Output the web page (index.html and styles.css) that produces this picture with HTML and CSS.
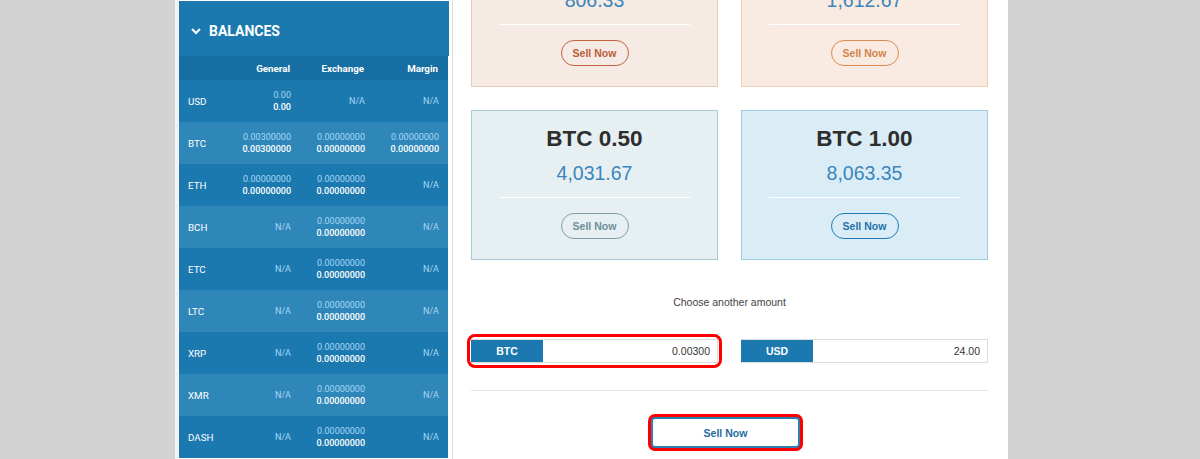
FILE: index.html
```html
<!DOCTYPE html>
<html lang="en">
<head>
<meta charset="utf-8">
<title>Sell BTC</title>
<link rel="stylesheet" href="styles.css">
</head>
<body>
<div class="page">
  <aside class="sidebar">
    <div class="sb-head">
      <svg class="chev" width="10" height="7" viewBox="0 0 10 7"><polyline points="1,1 5,5 9,1" fill="none" stroke="#fff" stroke-width="2"/></svg>
      <span>BALANCES</span>
    </div>
    <div class="bal-table">
      <div class="bal-row bal-hdr"><span></span><span>General</span><span>Exchange</span><span>Margin</span></div>
      <div class="bal-row dark"><span class="cur">USD</span><span class="val"><span class="v1">0.00</span><span class="v2">0.00</span></span><span class="na">N/A</span><span class="na">N/A</span></div>
      <div class="bal-row light"><span class="cur">BTC</span><span class="val"><span class="v1">0.00300000</span><span class="v2">0.00300000</span></span><span class="val"><span class="v1">0.00000000</span><span class="v2">0.00000000</span></span><span class="val"><span class="v1">0.00000000</span><span class="v2">0.00000000</span></span></div>
      <div class="bal-row dark"><span class="cur">ETH</span><span class="val"><span class="v1">0.00000000</span><span class="v2">0.00000000</span></span><span class="val"><span class="v1">0.00000000</span><span class="v2">0.00000000</span></span><span class="na">N/A</span></div>
      <div class="bal-row light"><span class="cur">BCH</span><span class="na">N/A</span><span class="val"><span class="v1">0.00000000</span><span class="v2">0.00000000</span></span><span class="na">N/A</span></div>
      <div class="bal-row dark"><span class="cur">ETC</span><span class="na">N/A</span><span class="val"><span class="v1">0.00000000</span><span class="v2">0.00000000</span></span><span class="na">N/A</span></div>
      <div class="bal-row light"><span class="cur">LTC</span><span class="na">N/A</span><span class="val"><span class="v1">0.00000000</span><span class="v2">0.00000000</span></span><span class="na">N/A</span></div>
      <div class="bal-row dark"><span class="cur">XRP</span><span class="na">N/A</span><span class="val"><span class="v1">0.00000000</span><span class="v2">0.00000000</span></span><span class="na">N/A</span></div>
      <div class="bal-row light"><span class="cur">XMR</span><span class="na">N/A</span><span class="val"><span class="v1">0.00000000</span><span class="v2">0.00000000</span></span><span class="na">N/A</span></div>
      <div class="bal-row dark"><span class="cur">DASH</span><span class="na">N/A</span><span class="val"><span class="v1">0.00000000</span><span class="v2">0.00000000</span></span><span class="na">N/A</span></div>
    </div>
  </aside>
  <main class="main">
    <div class="cards">
      <div class="card rust">
        <div class="card-title">BTC 0.10</div>
        <div class="card-price">806.33</div>
        <div class="card-sep"></div>
        <button class="pill">Sell Now</button>
      </div>
      <div class="card orange">
        <div class="card-title">BTC 0.20</div>
        <div class="card-price">1,612.67</div>
        <div class="card-sep"></div>
        <button class="pill">Sell Now</button>
      </div>
      <div class="card slate">
        <div class="card-title">BTC 0.50</div>
        <div class="card-price">4,031.67</div>
        <div class="card-sep"></div>
        <button class="pill">Sell Now</button>
      </div>
      <div class="card blue">
        <div class="card-title">BTC 1.00</div>
        <div class="card-price">8,063.35</div>
        <div class="card-sep"></div>
        <button class="pill">Sell Now</button>
      </div>
    </div>
    <p class="choose">Choose another amount</p>
    <div class="inputs">
      <div class="amount highlighted"><span class="amount-label">BTC</span><span class="amount-value">0.00300</span></div>
      <div class="amount"><span class="amount-label">USD</span><span class="amount-value">24.00</span></div>
    </div>
    <div class="divider"></div>
    <button class="sell-main">Sell Now</button>
  </main>
</div>
</body>
</html>
```

FILE: styles.css
```css
html, body {
  margin: 0;
  padding: 0;
}
body {
  background: #d3d3d3;
  overflow: hidden;
  font-family: "Liberation Sans", Arial, sans-serif;
}
.page {
  display: flex;
  margin-left: 175px;
  width: 829px;
  height: 459px;
  background: #fff;
  border-left: 4px solid #f3f3f3;
}
.sidebar {
  width: 270px;
  flex: none;
  margin-right: 3px;
  padding-top: 1px;
  font-family: Roboto, "Liberation Sans", sans-serif;
  color: #fff;
}
.sb-head {
  height: 55px;
  box-sizing: border-box;
  padding-top: 5px;
  background: #1b79b0;
  display: flex;
  align-items: center;
  padding-left: 12px;
  gap: 8px;
  font-weight: 700;
  font-size: 14px;
}
.chev { display: block; margin-top: 1px; }
.bal-table { width: 269px; }
.bal-row {
  display: grid;
  grid-template-columns: 1fr 74px 74px 74px;
  align-items: center;
  padding: 0 9px 0 9px;
  height: 42px;
  font-size: 9px;
}
.bal-row > span { text-align: right; }
.bal-row > .cur { text-align: left; font-size: 9.75px; }
.bal-hdr {
  height: 24px;
  background: #176ea3;
  font-weight: 700;
  font-size: 9.75px;
}
.bal-hdr > span { padding-right: 1px; }
.dark { background: #1b79b0; }
.light { background: #2f87b9; }
.val {
  display: flex;
  flex-direction: column;
  align-items: flex-end;
  line-height: 12px;
}
.v1 { color: #a6d7f4; }
.v2 { color: #fff; font-weight: 500; }
.na { color: #a6d7f4; }

.main {
  flex: 1;
  border-left: 1px solid #dedede;
  padding: 0 20px 0 18px;
  color: #333;
}
.cards {
  display: grid;
  grid-template-columns: 247px 247px;
  gap: 23px;
  margin-top: -63px;
}
.card {
  border: 1px solid;
  padding: 13px 0 20px;
  text-align: center;
}
.card-title {
  font-weight: 700;
  font-size: 22.5px;
  line-height: 29px;
  color: #2e2e2e;
}
.card-price {
  margin-top: 8px;
  font-size: 19.5px;
  line-height: 24px;
  color: #3a86bc;
}
.card-sep {
  height: 1px;
  background: #fff;
  margin: 12px 27px 15px;
}
.pill {
  display: inline-block;
  width: 68px;
  height: 26px;
  border: 1px solid;
  border-radius: 13px;
  background: transparent;
  font-family: "Liberation Sans", Arial, sans-serif;
  font-weight: 700;
  font-size: 10.5px;
  padding: 0;
  vertical-align: top;
}
.rust { background: #f5eae4; border-color: #e9c9bc; }
.rust .pill { border-color: #c3643f; color: #bc5c39; }
.orange { background: #f9ebe1; border-color: #f2cfb1; }
.orange .pill { border-color: #dc8b50; color: #d2844b; }
.slate { background: #e6eff1; border-color: #abcad6; }
.slate .pill { border-color: #7f9fa8; color: #6d8f99; }
.blue { background: #daecf6; border-color: #a0cbe2; }
.blue .pill { border-color: #1f7db5; color: #1e73a8; }

.choose {
  margin: 36px 0 0;
  text-align: center;
  font-size: 10.5px;
  line-height: 13px;
  color: #444;
}
.inputs {
  display: grid;
  grid-template-columns: 247px 247px;
  gap: 23px;
  margin-top: 30px;
}
.amount {
  position: relative;
  display: flex;
  align-items: stretch;
  height: 24px;
  box-sizing: border-box;
  border: 1px solid #dcdcdc;
  font-size: 10.5px;
}
.amount-label {
  width: 72px;
  background: #1b79b0;
  color: #fff;
  font-weight: 700;
  display: flex;
  align-items: center;
  justify-content: center;
  margin-left: -1px;
}
.amount-value {
  flex: 1;
  display: flex;
  align-items: center;
  justify-content: flex-end;
  padding-right: 7px;
  color: #333;
}
.highlighted::after {
  content: "";
  position: absolute;
  top: -6px;
  bottom: -6px;
  left: -5px;
  right: -5px;
  border: 3px solid #f00;
  border-radius: 8px;
  box-sizing: border-box;
}
.divider {
  height: 1px;
  background: #e4e4e4;
  margin-top: 27px;
}
.sell-main {
  display: block;
  margin: 26px 0 0 180px;
  width: 149px;
  height: 31px;
  border: 2px solid #2b7fb3;
  border-radius: 4px;
  box-shadow: 0 0 0 3px #f00;
  background: #fff;
  color: #1d6c9d;
  font-family: "Liberation Sans", Arial, sans-serif;
  font-weight: 700;
  font-size: 10.5px;
  padding: 0;
}
```
